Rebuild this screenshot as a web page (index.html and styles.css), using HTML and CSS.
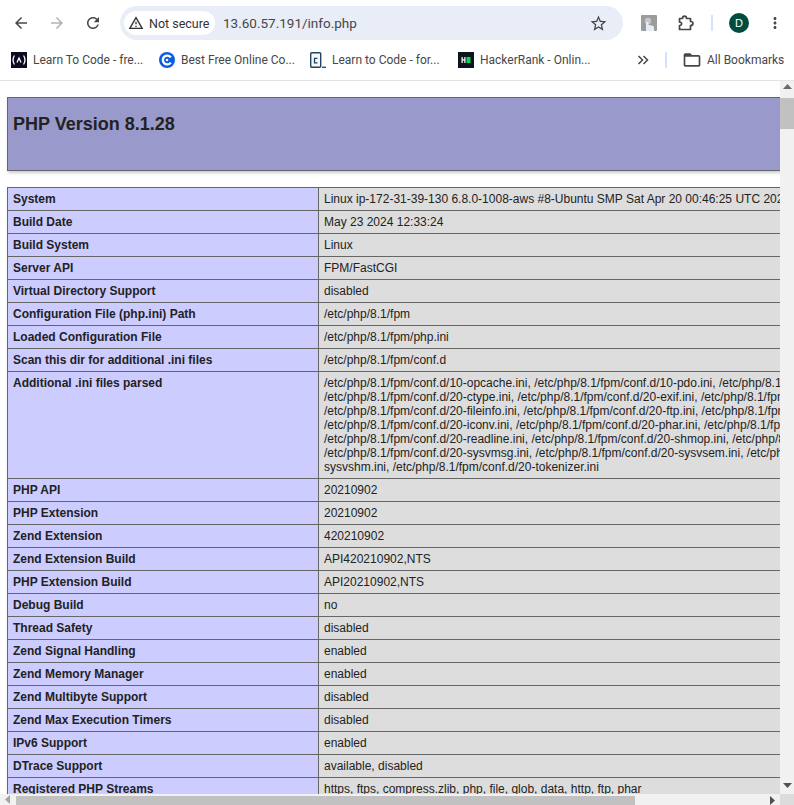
FILE: index.html
```html
<!DOCTYPE html>
<html>
<head>
<meta charset="utf-8">
<title>phpinfo()</title>
<link rel="stylesheet" href="styles.css">
</head>
<body>
<div class="toolbar">
  <button class="tool"><svg width="18" height="18" viewBox="0 0 24 24"><path fill="#474747" d="M20 11H7.83l5.59-5.59L12 4l-8 8 8 8 1.41-1.41L7.83 13H20v-2z"/></svg></button>
  <button class="tool"><svg width="18" height="18" viewBox="0 0 24 24"><path fill="#b2b2b2" d="M4 11h12.17l-5.59-5.59L12 4l8 8-8 8-1.41-1.41L16.17 13H4v-2z"/></svg></button>
  <button class="tool"><svg width="18" height="18" viewBox="0 0 24 24"><path fill="#474747" d="M17.65 6.35C16.2 4.9 14.21 4 12 4c-4.42 0-7.99 3.58-7.99 8s3.57 8 7.99 8c3.73 0 6.84-2.55 7.73-6h-2.08c-.82 2.33-3.04 4-5.65 4-3.31 0-6-2.69-6-6s2.69-6 6-6c1.66 0 3.14.69 4.22 1.78L13 11h7V4l-2.35 2.35z"/></svg></button>
  <div class="omnibox">
    <div class="secure">
      <svg width="16" height="16" viewBox="0 0 24 24"><path fill="#333" d="M12 5.99L19.53 19H4.47L12 5.99M12 2L1 21h22L12 2zm1 14h-2v2h2v-2zm0-6h-2v4h2v-4z"/></svg>
      <span>Not secure</span>
    </div>
    <div class="url">13.60.57.191/info.php</div>
    <svg width="19" height="19" viewBox="0 0 24 24"><path fill="#474747" d="M22 9.24l-7.19-.62L12 2 9.19 8.63 2 9.24l5.46 4.73L5.82 21 12 17.27 18.18 21l-1.63-7.03L22 9.24zM12 15.4l-3.76 2.27 1-4.28-3.32-2.88 4.38-.38L12 6.1l1.71 4.04 4.38.38-3.32 2.88 1 4.28L12 15.4z"/></svg>
  </div>
  <button class="tool tool-first">
    <svg width="16" height="16" viewBox="0 0 16 16"><rect width="16" height="16" rx="1" fill="#9c9c9c"/><circle cx="7" cy="6" r="3.2" fill="#c8c8c8"/><path fill="#e6edf6" d="M5 16V8.5c0-2 2.6-2 2.6 0V10l3.4.6c1.4.3 2 1 2 2.2V16z"/></svg>
  </button>
  <button class="tool"><svg width="18" height="18" viewBox="0 0 18 18"><path fill="none" stroke="#474747" stroke-width="1.7" stroke-linejoin="round" d="M3.5 4.5H6.500C6.500 1.200 10.500 1.200 10.500 4.500H14.500V7.500C17.800 7.500 17.800 11.500 14.500 11.500V15.500H3.500V11.500C6.300 11.500 6.300 8 3.500 8z"/></svg></button>
  <div class="sep sep-tool"></div>
  <button class="tool"><span class="avatar">D</span></button>
  <button class="tool"><svg width="18" height="18" viewBox="0 0 24 24"><path fill="#474747" d="M12 8c1.100 0 2-.9 2-2s-.9-2-2-2-2 .9-2 2 .9 2 2 2zm0 2c-1.100 0-2 .9-2 2s.9 2 2 2 2-.9 2-2-.9-2-2-2zm0 6c-1.100 0-2 .9-2 2s.9 2 2 2 2-.9 2-2-.9-2-2-2z"/></svg></button>
</div>

<div class="bookmarks">
  <div class="bm bm-a">
    <svg width="16" height="16" viewBox="0 0 16 16"><rect width="16" height="16" fill="#0a0a23"/><path fill="none" stroke="#fff" stroke-width="1.3" d="M3.4 3.5C1.9 6 1.9 10 3.4 12.500M12.600 3.5c1.500 2.500 1.500 6.500 0 9M6 10.500l2-4.500 2 4.500"/></svg>
    <span>Learn To Code - fre...</span>
  </div>
  <div class="bm bm-b">
    <svg width="16" height="16" viewBox="0 0 16 16"><circle cx="8" cy="8" r="8" fill="#0b5ee0"/><path fill="none" stroke="#fff" stroke-width="2.4" d="M11.800 5.400a4.400 4.400 0 1 0 0 5.200"/><circle cx="8" cy="8" r="1.300" fill="#fff"/></svg>
    <span>Best Free Online Co...</span>
  </div>
  <div class="bm bm-c">
    <svg width="16" height="16" viewBox="0 0 16 16"><rect x=".7" y=".7" width="10" height="14.600" rx="1" fill="#f5f8fa" stroke="#23445c" stroke-width="1.4"/><path fill="none" stroke="#23445c" stroke-width="1.3" d="M7.500 6.300H4.500v4.500h3"/><path stroke="#23445c" stroke-width="1.3" d="M12 15.300h4"/></svg>
    <span>Learn to Code - for...</span>
  </div>
  <div class="bm bm-d">
    <svg width="16" height="16" viewBox="0 0 16 16"><rect width="16" height="16" fill="#0e141e"/><path fill="#fff" d="M3.500 5h1.200v2.300h1.600V5h1.200v6H6.300V8.500H4.700V11H3.500z"/><rect x="8.500" y="5" width="4" height="6" fill="#00d95a"/></svg>
    <span>HackerRank - Onlin...</span>
  </div>
  <div class="more">
    <svg width="12" height="12" viewBox="0 0 12 12"><path fill="none" stroke="#474747" stroke-width="1.5" d="M1.500 2l4 4-4 4M6.500 2l4 4-4 4"/></svg>
  </div>
  <div class="sep sep-bm"></div>
  <div class="bm all">
    <svg width="20" height="20" viewBox="0 0 24 24"><path fill="#474747" d="M20 6h-8l-2-2H4c-1.100 0-1.990.900-1.990 2L2 18c0 1.100.900 2 2 2h16c1.100 0 2-.900 2-2V8c0-1.100-.900-2-2-2zm0 12H4V8h16v10z"/></svg>
    <span>All Bookmarks</span>
  </div>
</div>

<div class="window">
  <div class="view">
    <table class="info head">
      <tr class="h"><td><h1>PHP Version 8.1.28</h1></td></tr>
    </table>
    <table class="info">
      <tr><td class="e">System</td><td class="v">Linux ip-172-31-39-130 6.8.0-1008-aws #8-Ubuntu SMP Sat Apr 20 00:46:25 UTC 2024 x86_64</td></tr>
      <tr><td class="e">Build Date</td><td class="v">May 23 2024 12:33:24</td></tr>
      <tr><td class="e">Build System</td><td class="v">Linux</td></tr>
      <tr><td class="e">Server API</td><td class="v">FPM/FastCGI</td></tr>
      <tr><td class="e">Virtual Directory Support</td><td class="v">disabled</td></tr>
      <tr><td class="e">Configuration File (php.ini) Path</td><td class="v">/etc/php/8.1/fpm</td></tr>
      <tr><td class="e">Loaded Configuration File</td><td class="v">/etc/php/8.1/fpm/php.ini</td></tr>
      <tr><td class="e">Scan this dir for additional .ini files</td><td class="v">/etc/php/8.1/fpm/conf.d</td></tr>
      <tr><td class="e">Additional .ini files parsed</td><td class="v">/etc/php/8.1/fpm/conf.d/10-opcache.ini, /etc/php/8.1/fpm/conf.d/10-pdo.ini, /etc/php/8.1/fpm/conf.d/20-calendar.ini, /etc/php/8.1/fpm/conf.d/20-ctype.ini, /etc/php/8.1/fpm/conf.d/20-exif.ini, /etc/php/8.1/fpm/conf.d/20-ffi.ini, /etc/php/8.1/fpm/conf.d/20-fileinfo.ini, /etc/php/8.1/fpm/conf.d/20-ftp.ini, /etc/php/8.1/fpm/conf.d/20-gettext.ini, /etc/php/8.1/fpm/conf.d/20-iconv.ini, /etc/php/8.1/fpm/conf.d/20-phar.ini, /etc/php/8.1/fpm/conf.d/20-posix.ini, /etc/php/8.1/fpm/conf.d/20-readline.ini, /etc/php/8.1/fpm/conf.d/20-shmop.ini, /etc/php/8.1/fpm/conf.d/20-sockets.ini, /etc/php/8.1/fpm/conf.d/20-sysvmsg.ini, /etc/php/8.1/fpm/conf.d/20-sysvsem.ini, /etc/php/8.1/fpm/conf.d/20-sysvshm.ini, /etc/php/8.1/fpm/conf.d/20-tokenizer.ini</td></tr>
      <tr><td class="e">PHP API</td><td class="v">20210902</td></tr>
      <tr><td class="e">PHP Extension</td><td class="v">20210902</td></tr>
      <tr><td class="e">Zend Extension</td><td class="v">420210902</td></tr>
      <tr><td class="e">Zend Extension Build</td><td class="v">API420210902,NTS</td></tr>
      <tr><td class="e">PHP Extension Build</td><td class="v">API20210902,NTS</td></tr>
      <tr><td class="e">Debug Build</td><td class="v">no</td></tr>
      <tr><td class="e">Thread Safety</td><td class="v">disabled</td></tr>
      <tr><td class="e">Zend Signal Handling</td><td class="v">enabled</td></tr>
      <tr><td class="e">Zend Memory Manager</td><td class="v">enabled</td></tr>
      <tr><td class="e">Zend Multibyte Support</td><td class="v">disabled</td></tr>
      <tr><td class="e">Zend Max Execution Timers</td><td class="v">disabled</td></tr>
      <tr><td class="e">IPv6 Support</td><td class="v">enabled</td></tr>
      <tr><td class="e">DTrace Support</td><td class="v">available, disabled</td></tr>
      <tr><td class="e">Registered PHP Streams</td><td class="v">https, ftps, compress.zlib, php, file, glob, data, http, ftp, phar</td></tr>
    </table>
  </div>
  <div class="vbar">
    <svg class="arrow-up" width="9" height="5" viewBox="0 0 9 5"><path fill="#6a6a6a" d="M4.500 0L9 5H0z"/></svg>
    <div class="vthumb"></div>
    <svg class="arrow-down" width="9" height="5" viewBox="0 0 9 5"><path fill="#505050" d="M4.500 5L0 0h9z"/></svg>
  </div>
  <div class="hbar">
    <svg class="arrow-left" width="5" height="9" viewBox="0 0 5 9"><path fill="#a3a3a3" d="M0 4.500L5 0v9z"/></svg>
    <div class="hthumb"></div>
    <svg class="arrow-right" width="5" height="9" viewBox="0 0 5 9"><path fill="#505050" d="M5 4.500L0 9V0z"/></svg>
  </div>
  <div class="corner"></div>
</div>
</body>
</html>
```

FILE: styles.css
```css
html, body { margin:0; padding:0; height:805px; overflow:hidden; background:#fff; }
body { display:flex; flex-direction:column; font-family:Roboto,"Liberation Sans",sans-serif; }

/* browser toolbar */
.toolbar { display:flex; align-items:center; height:46px; padding-left:3px; flex:none; }
.tool { display:flex; align-items:center; justify-content:center; width:36px; height:34px; padding:0; border:0; background:none; flex:none; }
.tool-first { margin-left:8px; }
.omnibox { display:flex; align-items:center; width:503px; height:34px; margin-left:9px; padding:0 15px 0 4px; box-sizing:border-box; border-radius:17px; background:#e9edf7; flex:none; }
.secure { display:flex; align-items:center; gap:5px; width:91px; height:24px; padding-left:4px; box-sizing:border-box; border-radius:12px; background:#fff; color:#333; font-size:12.5px; }
.url { flex:1; margin-left:8px; color:#474747; font-size:13.5px; }
.sep { width:2px; height:16px; background:#d3e3fd; flex:none; }
.sep-tool { margin:0 8px; }
.avatar { display:flex; align-items:center; justify-content:center; width:20px; height:20px; border-radius:50%; background:#004d40; color:#fff; font-size:11px; }

/* bookmarks bar */
.bookmarks { display:flex; align-items:center; height:28px; padding:0 0 6px 11px; border-bottom:1px solid #e3e3e3; flex:none; }
.bm { display:flex; align-items:center; gap:6px; color:#474747; font-size:12px; white-space:nowrap; flex:none; }
.bm-a { width:148px; }
.bm-b { width:151px; }
.bm-c { width:148px; }
.bm-d { width:134px; }
.more { width:12px; height:12px; margin-left:45px; display:flex; }
.sep-bm { margin-left:16px; }
.all { margin-left:15px; gap:5px; }

/* page + scrollbars */
.window { display:grid; grid-template-columns:780px 14px; grid-template-rows:713px 11px; flex:none; }
.view { overflow:hidden; padding:16px 0 0 7px; box-sizing:border-box; font-family:"Liberation Sans",Arial,sans-serif; color:#222; background:#fff; }
.info { border-collapse:collapse; width:934px; margin-bottom:16px; box-shadow:1px 2px 3px #ccc; table-layout:fixed; }
.info td { border:1px solid #666; padding:4px 5px; font-size:12px; line-height:14px; vertical-align:baseline; }
.h td { background:#99c; font-weight:bold; }
.h h1 { margin:12px 0 31px; font-size:18px; line-height:21px; }
.e { width:300px; background:#ccf; font-weight:bold; }
.v { background:#ddd; overflow-x:hidden; word-wrap:break-word; }

.vbar { display:flex; flex-direction:column; align-items:center; background:#f1f1f1; }
.arrow-up { margin-top:3px; }
.vthumb { width:14px; height:31px; margin-top:9px; background:#c1c1c1; }
.arrow-down { margin-top:auto; margin-bottom:6px; }
.hbar { display:flex; align-items:center; height:11px; background:#f1f1f1; overflow:hidden; }
.arrow-left { margin-left:5px; }
.hthumb { width:619px; height:9px; margin:2px 0 0 6px; background:#c1c1c1; }
.arrow-right { margin:2px 0 0 135px; }
.corner { background:#dcdcdc; }
```
